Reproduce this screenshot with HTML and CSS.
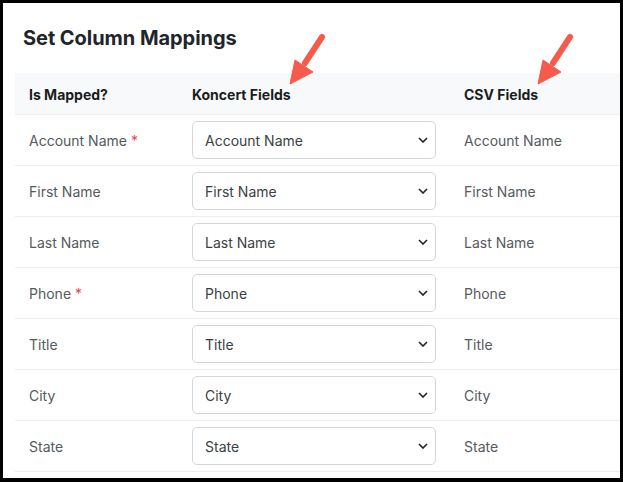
FILE: index.html
```html
<!DOCTYPE html>
<html>
<head>
<meta charset="utf-8">
<link rel="stylesheet" href="styles.css">
</head>
<body>
<div class="frame">
  <h1 class="title">Set Column Mappings</h1>
  <div class="table">
    <div class="row head">
      <div class="cell">Is Mapped?</div>
      <div class="cell">Koncert Fields</div>
      <div class="cell">CSV Fields</div>
    </div>
    <div class="row">
      <div class="cell label">Account Name <span class="req">*</span></div>
      <div class="cell"><div class="select"><span>Account Name</span><svg class="chev" viewBox="0 0 10 6"><path d="M1 1l4 4 4-4"/></svg></div></div>
      <div class="cell label">Account Name</div>
    </div>
    <div class="row">
      <div class="cell label">First Name</div>
      <div class="cell"><div class="select"><span>First Name</span><svg class="chev" viewBox="0 0 10 6"><path d="M1 1l4 4 4-4"/></svg></div></div>
      <div class="cell label">First Name</div>
    </div>
    <div class="row">
      <div class="cell label">Last Name</div>
      <div class="cell"><div class="select"><span>Last Name</span><svg class="chev" viewBox="0 0 10 6"><path d="M1 1l4 4 4-4"/></svg></div></div>
      <div class="cell label">Last Name</div>
    </div>
    <div class="row">
      <div class="cell label">Phone <span class="req">*</span></div>
      <div class="cell"><div class="select"><span>Phone</span><svg class="chev" viewBox="0 0 10 6"><path d="M1 1l4 4 4-4"/></svg></div></div>
      <div class="cell label">Phone</div>
    </div>
    <div class="row">
      <div class="cell label">Title</div>
      <div class="cell"><div class="select"><span>Title</span><svg class="chev" viewBox="0 0 10 6"><path d="M1 1l4 4 4-4"/></svg></div></div>
      <div class="cell label">Title</div>
    </div>
    <div class="row">
      <div class="cell label">City</div>
      <div class="cell"><div class="select"><span>City</span><svg class="chev" viewBox="0 0 10 6"><path d="M1 1l4 4 4-4"/></svg></div></div>
      <div class="cell label">City</div>
    </div>
    <div class="row">
      <div class="cell label">State</div>
      <div class="cell"><div class="select"><span>State</span><svg class="chev" viewBox="0 0 10 6"><path d="M1 1l4 4 4-4"/></svg></div></div>
      <div class="cell label">State</div>
    </div>
  </div>
  <svg class="arrows" viewBox="0 0 623 482" width="623" height="482">
    <g fill="#f65a4b" stroke="#f65a4b">
      <line x1="322" y1="37" x2="305" y2="63" stroke-width="6" stroke-linecap="round"/>
      <polygon points="290,84 295,60 313,72" stroke-width="1" stroke-linejoin="round"/>
      <line x1="570" y1="37" x2="553" y2="63" stroke-width="6" stroke-linecap="round"/>
      <polygon points="538,84 543,60 561,72" stroke-width="1" stroke-linejoin="round"/>
    </g>
  </svg>
</div>
</body>
</html>
```
FILE: styles.css
```css
* { box-sizing: border-box; }
html, body { margin: 0; padding: 0; background: #000; }
body { font-family: Inter, "Noto Sans", sans-serif; }
.frame {
  position: relative;
  width: 623px;
  height: 482px;
  background: #fff;
  border: 3px solid #000;
  border-bottom-width: 4px;
  overflow: hidden;
}
.title {
  margin: 0;
  padding: 23px 0 0 20px;
  height: 70px;
  font-size: 20px;
  line-height: 24px;
  font-weight: 700;
  color: #212529;
  letter-spacing: -0.05px;
}
.table { margin-left: 12px; }
.row {
  display: grid;
  grid-template-columns: 163px 272px 1fr;
  height: 51px;
  border-bottom: 1px solid #eceef1;
  align-items: center;
}
.row.head {
  height: 42px;
  background: #f8f9fa;
  border-bottom: 1px solid #eef0f2;
  font-weight: 700;
  font-size: 14px;
  color: #1a1d21;
  padding-top: 2px;
}
.cell { padding: 0 14px; }
.label { font-size: 14px; color: #555a60; }
.req { color: #e5484d; }
.select {
  height: 38px;
  border: 1px solid #d3d6db;
  border-radius: 5px;
  display: flex;
  align-items: center;
  justify-content: space-between;
  padding: 0 7px 0 12px;
  font-size: 14px;
  color: #3a3f45;
}
.chev { width: 10px; height: 6px; fill: none; stroke: #222; stroke-width: 1.6; }
.arrows { position: absolute; left: -3px; top: -3px; pointer-events: none; }
```
